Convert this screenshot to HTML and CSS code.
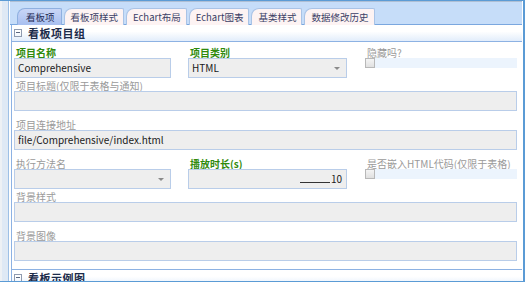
FILE: index.html
```html
<!DOCTYPE html>
<html lang="zh-CN">
<head>
  <meta charset="UTF-8" />
  <title>看板项</title>
  <link rel="stylesheet" href="styles.css">
</head>
<body>
  <div class="frame">
    <div class="rail"></div>
    <div class="main">
      <div class="tabstrip">
        <div class="tab active">看板项</div>
        <div class="tab">看板项样式</div>
        <div class="tab">Echart布局</div>
        <div class="tab">Echart图表</div>
        <div class="tab">基类样式</div>
        <div class="tab">数据修改历史</div>
      </div>

      <div class="panel">
        <div class="panel-head"><span class="toggle"></span>看板项目组</div>
        <div class="form">
          <div class="row r1">
            <div class="field">
              <label class="req">项目名称</label>
              <div class="input">Comprehensive</div>
            </div>
            <div class="field">
              <label class="req">项目类别</label>
              <div class="input select">HTML<span class="caret"></span></div>
            </div>
            <div class="field">
              <label>隐藏吗?</label>
              <div class="check"><span class="box"></span><span class="strip"></span></div>
            </div>
          </div>

          <div class="row r2">
            <div class="field wide">
              <label>项目标题(仅限于表格与通知)</label>
              <div class="input"></div>
            </div>
          </div>

          <div class="row r3">
            <div class="field wide">
              <label>项目连接地址</label>
              <div class="input">file/Comprehensive/index.html</div>
            </div>
          </div>

          <div class="row r4">
            <div class="field">
              <label>执行方法名</label>
              <div class="input select"><span class="caret"></span></div>
            </div>
            <div class="field">
              <label class="req">播放时长(s)</label>
              <div class="input num"><span class="line"></span>10</div>
            </div>
            <div class="field">
              <label>是否嵌入HTML代码(仅限于表格)</label>
              <div class="check"><span class="box"></span><span class="strip"></span></div>
            </div>
          </div>

          <div class="row r5">
            <div class="field wide">
              <label>背景样式</label>
              <div class="input"></div>
            </div>
          </div>

          <div class="row r6">
            <div class="field wide">
              <label>背景图像</label>
              <div class="input"></div>
            </div>
          </div>
        </div>
      </div>

      <div class="panel next">
        <div class="panel-head"><span class="toggle"></span>看板示例图</div>
      </div>
    </div>
  </div>
</body>
</html>
```

FILE: styles.css
```css
body {
  margin: 0;
  width: 525px;
  height: 282px;
  overflow: hidden;
  background: #fff;
  font-family: "Noto Sans CJK SC", "Noto Sans", sans-serif;
  font-size: 10px;
  color: #222;
}

.frame {
  display: flex;
  height: 280px;
  border-top: 1px solid #5b9bd5;
  border-bottom: 1px solid #5b9bd5;
  border-right: 2px solid #5b9bd5;
}

.rail {
  width: 6px;
  flex: none;
  background: #dfe9f5;
  border-left: 2px solid #eef1f5;
  border-right: 1px solid #9ec0e6;
}

.main {
  flex: 1;
  display: flex;
  flex-direction: column;
  padding-left: 1px;
  padding-right: 1px;
  overflow: hidden;
}

.tabstrip {
  display: flex;
  gap: 2px;
  height: 17px;
  padding-top: 5px;
  padding-left: 7px;
  background: #c6ddf9;
  border-top: 1px solid #afbfd4;
  border-bottom: 1px solid #7aa7df;
}

.tab {
  height: 16px;
  margin-top: 1px;
  padding: 0 5px 0 6px;
  line-height: 16px;
  font-size: 9.5px;
  color: #3b3f66;
  background: #fdf3f3;
  border: 1px solid #a9c3e6;
  border-bottom: none;
  border-radius: 8px 2px 0 0;
}

.tab.active {
  padding: 0 6px 0 8px;
  background: linear-gradient(#c9d6f6, #a8bff0);
  color: #262a55;
  border-color: #8fb0e0;
}

.panel {
  margin-left: 1px;
  border-left: 1px solid #8db2e3;
}

.panel-head {
  height: 16px;
  line-height: 16px;
  font-size: 11px;
  font-weight: bold;
  letter-spacing: 0.5px;
  color: #1c2b4a;
  background: linear-gradient(#ffffff 40%, #e2edfb);
  border-bottom: 1px solid #8db2e3;
  padding-left: 2px;
  display: flex;
  align-items: center;
}

.toggle {
  width: 6px;
  height: 6px;
  border: 1px solid #8f9bb0;
  margin-right: 6px;
  position: relative;
}

.toggle::after {
  content: "";
  position: absolute;
  left: 1px;
  right: 1px;
  top: 2px;
  height: 1px;
  background: #5a6780;
}

.form {
  padding: 3px 5px 8px 2px;
}

.row {
  display: grid;
  grid-template-columns: 157px 159px 1fr;
  column-gap: 17px;
}

.r2 { margin-top: 0; }
.r3 { margin-top: 6px; }
.r4 { margin-top: 6px; }
.r5 { margin-top: 0; }
.r6 { margin-top: 6px; }

.row .wide {
  grid-column: 1 / 4;
}

.row .field:nth-child(3) {
  margin-left: 1px;
}

label {
  display: block;
  height: 13px;
  line-height: 15px;
  padding-left: 2px;
  color: #9a9a9a;
  font-size: 10px;
  white-space: nowrap;
}

label.req {
  color: #2f8a0c;
  font-weight: bold;
}

.input {
  height: 18px;
  line-height: 18px;
  padding: 0 3px;
  background: #eeeeee;
  border: 1px solid #b9cde9;
  color: #1a1a1a;
  font-size: 10px;
  position: relative;
}

.select .caret {
  position: absolute;
  right: 6px;
  top: 8px;
  border-left: 3px solid transparent;
  border-right: 3px solid transparent;
  border-top: 3px solid #8a8a8a;
}

.num {
  display: flex;
  justify-content: flex-end;
  align-items: baseline;
  padding-right: 4px;
}

.num .line {
  width: 30px;
  border-bottom: 1px solid #333;
  margin-right: 1px;
}

.check {
  display: flex;
}

.check .box {
  width: 8px;
  height: 8px;
  border: 1px solid #b8b8b8;
  background: linear-gradient(#f4f4f4, #e0e0e0);
}

.check .strip {
  flex: 1;
  height: 10px;
  background: #ecf4fd;
}

.panel.next {
  border-top: 1px solid #8db2e3;
}
```
